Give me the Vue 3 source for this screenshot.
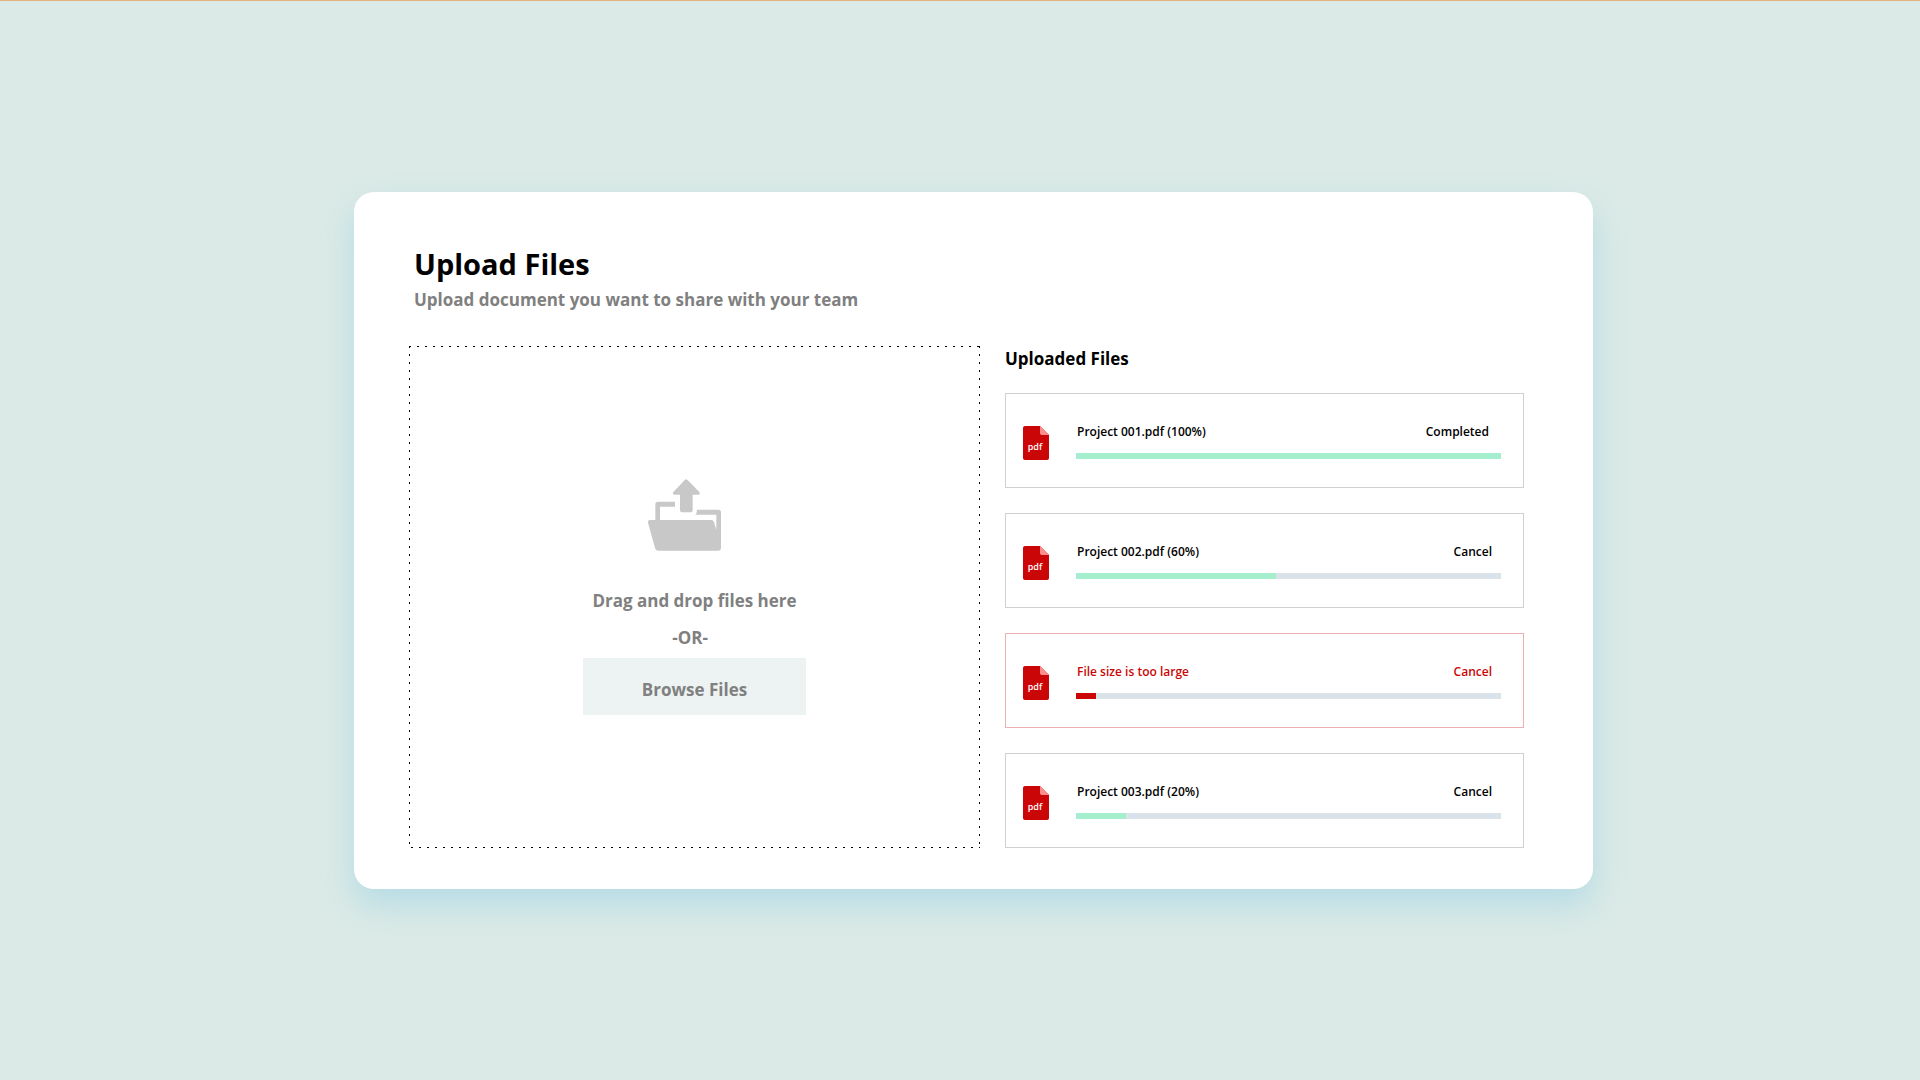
<script setup>
const files = [
  { id: 1, label: 'Project 001.pdf (100%)', fill: 100, state: 'done' },
  { id: 2, label: 'Project 002.pdf (60%)', fill: 47, state: 'loading' },
  { id: 3, label: 'File size is too large', fill: 4.7, state: 'error' },
  { id: 4, label: 'Project 003.pdf (20%)', fill: 11.8, state: 'loading' },
]
</script>

<template>
  <div class="page">
    <main class="card">
      <header class="head">
        <h1>Upload Files</h1>
        <p>Upload document you want to share with your team</p>
      </header>
      <div class="columns">
        <section class="drop">
          <svg class="folder" viewBox="84 58 279 216" aria-hidden="true">
            <g fill="#c8c8c8">
              <path d="M195 60.500Q198.500 57.500 202 60.500L238 97Q242 104.500 234 105H218V150Q218 158 210 158H188Q180 158 180 150V105H163Q156 104.500 160 97Z" />
              <path d="M106 182V134Q106 126 114 126H165V141H120V182Z" />
              <path fill-rule="evenodd" d="M89 181H274Q280 181 282 187L289 211V165H226Q231 161 231 150H295Q303 150 303 158V264Q303 273 294 273H115Q107 273 105 265L84 189Q83 182 89 181Z" />
            </g>
          </svg>
          <p>Drag and drop files here</p>
          <p>-OR-&nbsp;&nbsp;</p>
          <button type="button" class="browse">Browse Files</button>
        </section>
        <section class="uploads">
          <h2>Uploaded Files</h2>
          <ul>
            <li v-for="file in files" :key="file.id" :class="['file', file.state]">
              <svg class="pdf" viewBox="0 0 26 34" aria-hidden="true">
                <path fill="#cb0606" d="M2 0H17L26 9V32Q26 34 24 34H2Q0 34 0 32V2Q0 0 2 0Z" />
                <path fill="#ff8f8f" d="M17 0L26 9H19Q17 9 17 7Z" />
                <text x="12" y="24" text-anchor="middle">pdf</text>
              </svg>
              <div class="info">
                <div class="line">
                  <span :id="'file-' + file.id">{{ file.label }}</span>
                  <span v-if="file.state === 'done'" class="status">Completed</span>
                  <button v-else type="button" class="cancel">Cancel</button>
                </div>
                <div class="track" role="progressbar" :aria-labelledby="'file-' + file.id" :aria-valuenow="file.fill">
                  <div class="fill" :style="{ width: file.fill + '%' }"></div>
                </div>
              </div>
            </li>
          </ul>
        </section>
      </div>
    </main>
  </div>
</template>

<style>
body {
  background: #dbeae6;
}
</style>

<style scoped>
.page {
  box-sizing: border-box;
  min-height: 100vh;
  display: grid;
  grid-template-columns: 354fr 1239fr 327fr;
  align-items: center;
  border-top: 1px solid #e2b17c;
  font-family: "Open Sans", "Noto Sans", sans-serif;
  font-weight: 600;
  color: #000;
}
h1, h2, p, ul {
  margin: 0;
  padding: 0;
}
button {
  border: 0;
  background: none;
  font: inherit;
  color: inherit;
  cursor: pointer;
}
.card {
  grid-column: 2;
  box-sizing: border-box;
  padding: 52px 69px 41px 55px;
  border-radius: 20px;
  background: #fff;
  box-shadow: 0 16px 32px rgba(173, 216, 230, 0.8);
}
.head {
  padding-left: 5px;
  margin-bottom: 32px;
}
h1 {
  font-size: 29px;
  line-height: 40px;
  font-weight: 700;
  margin-bottom: 2px;
}
.head p {
  font-size: 17px;
  line-height: 28px;
  font-weight: 700;
  color: #808080;
}
.columns {
  display: grid;
  grid-template-columns: 571fr 519fr;
  gap: 25px;
}
.drop {
  display: flex;
  flex-direction: column;
  align-items: center;
  justify-content: center;
  padding: 1px;
  background:
    repeating-linear-gradient(90deg, #000 0 2px, transparent 2px 8px) top / 100% 1px no-repeat,
    repeating-linear-gradient(90deg, transparent 0 2px, #000 2px 4px, transparent 4px 8px) bottom / 100% 1px no-repeat,
    repeating-linear-gradient(#000 0 2px, transparent 2px 8px) left / 1px 100% no-repeat,
    repeating-linear-gradient(#000 0 2px, transparent 2px 8px) right / 1px 100% no-repeat;
  font-size: 17px;
  line-height: 37px;
  font-weight: 700;
  color: #808080;
}
.folder {
  width: 93px;
  height: 72px;
  margin-bottom: 31px;
}
.browse {
  width: 223px;
  height: 57px;
  margin-top: 2px;
  padding-top: 6px;
  background: #edf3f3;
}
h2 {
  font-size: 17px;
  line-height: 26px;
  font-weight: 700;
  margin-bottom: 21px;
}
ul {
  display: flex;
  flex-direction: column;
  gap: 25px;
  list-style: none;
}
.file {
  display: flex;
  align-items: center;
  gap: 27px;
  box-sizing: border-box;
  height: 95px;
  padding: 4px 22px 0 17px;
  border: 1px solid #d0d0d0;
}
.pdf {
  flex: none;
  width: 26px;
  height: 34px;
}
.pdf text {
  fill: #fff;
  font-size: 9px;
  font-weight: 600;
}
.info {
  flex: 1;
  padding-bottom: 2px;
}
.line {
  display: flex;
  justify-content: space-between;
  padding-left: 1px;
  margin-bottom: 13px;
  font-size: 12px;
  line-height: 16px;
}
.status {
  padding-right: 12px;
}
.cancel {
  padding: 0 9px 0 0;
}
.track {
  height: 6px;
  background: #dbe3ea;
}
.fill {
  height: 6px;
  background: #a5efcf;
}
.error {
  border-color: #edb0b2;
  color: #cb0606;
}
.error .fill {
  background: #cb0606;
}
</style>
